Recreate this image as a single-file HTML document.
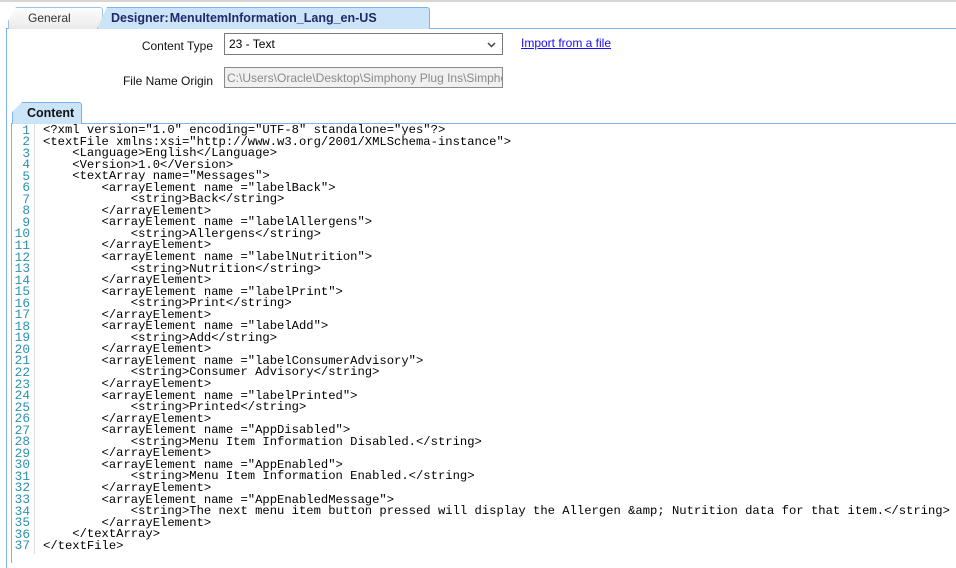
<!DOCTYPE html>
<html><head><meta charset="utf-8"><style>
*{margin:0;padding:0;box-sizing:border-box}
body{width:956px;height:553px;overflow:hidden;background:#fff;font-family:"Liberation Sans",sans-serif;position:relative}
.topline{position:absolute;left:0;top:0;width:956px;height:2px;background:#d6d6d6}
.tab{position:absolute;font-size:12px;}
.gen{left:8px;top:7px;width:95px;height:22px;background:linear-gradient(#fdfdfd,#eaeaea);border:1px solid #9cc3ea;border-bottom:none;border-radius:3px 3px 0 0;clip-path:polygon(8px 0,100% 0,100% 100%,0 100%,0 14px);color:#333;padding:3px 0 0 19px}
.des{left:97px;top:7px;width:333px;height:22px;background:#cce4f7;border:1px solid #7eb4ea;border-bottom:none;border-radius:3px 3px 0 0;clip-path:polygon(10px 0,100% 0,100% 100%,0 100%);color:#1e2a6a;font-weight:bold;padding:3px 0 0 13px;font-size:12.5px}
.panel{position:absolute;left:6px;top:28px;width:960px;height:540px;border-left:1px solid #7eb4ea;border-top:1px solid #7eb4ea}
.lbl{position:absolute;font-size:12px;color:#111;text-align:right}
.combo{position:absolute;left:224px;top:33px;width:279px;height:22px;border:1px solid #7a7a7a;background:#fff;font-size:12px;padding:3px 0 0 4px}
.combo svg{position:absolute;right:6px;top:8px}
.fn{position:absolute;left:224px;top:67px;width:279px;height:21px;border:1px solid #8a8a8a;background:#f0f0f0;color:#8a8a8a;font-size:12px;padding:3px 0 0 2px;white-space:nowrap;overflow:hidden}
.link{position:absolute;left:521px;top:36px;font-size:12px;color:#1a0dff;text-decoration:underline}
.ctab{position:absolute;left:12px;top:102px;width:70px;height:22px;background:#cce4f7;border:1px solid #7eb4ea;border-bottom:none;border-radius:3px 3px 0 0;clip-path:polygon(10px 0,100% 0,100% 100%,0 100%,0 10px);font-weight:bold;font-size:12.5px;color:#111;padding:3px 0 0 14px}
.ed{position:absolute;left:11px;top:123px;width:950px;height:440px;border-left:1px solid #7eb4ea;border-top:1px solid #7eb4ea;background:#fff}
.gut{position:absolute;left:12px;top:124px;width:23px;height:430px;border-right:1px solid #ddd}
.nums{position:absolute;left:12px;top:124.5px;width:18px;text-align:right;font-family:"Liberation Mono",monospace;font-size:12.8px;line-height:11.55px;color:#2b91af;white-space:pre}
.code{position:absolute;left:43px;top:125px;font-family:"Liberation Mono",monospace;font-size:12.2px;line-height:11.55px;color:#000;white-space:pre}
</style></head><body>
<div class="topline"></div>
<div class="panel"></div>
<div class="tab gen">General</div>
<div class="tab des">Designer:&#8202;MenuItemInformation_Lang_en-US</div>
<div class="lbl" style="left:100px;top:39px;width:113px">Content Type</div>
<div class="combo">23 - Text<svg width="9" height="6" viewBox="0 0 9 6"><path d="M1 1 L4.5 4.5 L8 1" fill="none" stroke="#444" stroke-width="1.5"/></svg></div>
<div class="link">Import from a file</div>
<div class="lbl" style="left:100px;top:74px;width:113px">File Name Origin</div>
<div class="fn">C:\Users\Oracle\Desktop\Simphony Plug Ins\Simphony</div>
<div class="ed"></div>
<div class="ctab">Content</div>
<div class="gut"></div>
<div class="nums">1
2
3
4
5
6
7
8
9
10
11
12
13
14
15
16
17
18
19
20
21
22
23
24
25
26
27
28
29
30
31
32
33
34
35
36
37</div>
<div class="code">&lt;?xml version="1.0" encoding="UTF-8" standalone="yes"?&gt;
&lt;textFile xmlns:xsi="http://www.w3.org/2001/XMLSchema-instance"&gt;
    &lt;Language&gt;English&lt;/Language&gt;
    &lt;Version&gt;1.0&lt;/Version&gt;
    &lt;textArray name="Messages"&gt;
        &lt;arrayElement name ="labelBack"&gt;
            &lt;string&gt;Back&lt;/string&gt;
        &lt;/arrayElement&gt;
        &lt;arrayElement name ="labelAllergens"&gt;
            &lt;string&gt;Allergens&lt;/string&gt;
        &lt;/arrayElement&gt;
        &lt;arrayElement name ="labelNutrition"&gt;
            &lt;string&gt;Nutrition&lt;/string&gt;
        &lt;/arrayElement&gt;
        &lt;arrayElement name ="labelPrint"&gt;
            &lt;string&gt;Print&lt;/string&gt;
        &lt;/arrayElement&gt;
        &lt;arrayElement name ="labelAdd"&gt;
            &lt;string&gt;Add&lt;/string&gt;
        &lt;/arrayElement&gt;
        &lt;arrayElement name ="labelConsumerAdvisory"&gt;
            &lt;string&gt;Consumer Advisory&lt;/string&gt;
        &lt;/arrayElement&gt;
        &lt;arrayElement name ="labelPrinted"&gt;
            &lt;string&gt;Printed&lt;/string&gt;
        &lt;/arrayElement&gt;
        &lt;arrayElement name ="AppDisabled"&gt;
            &lt;string&gt;Menu Item Information Disabled.&lt;/string&gt;
        &lt;/arrayElement&gt;
        &lt;arrayElement name ="AppEnabled"&gt;
            &lt;string&gt;Menu Item Information Enabled.&lt;/string&gt;
        &lt;/arrayElement&gt;
        &lt;arrayElement name ="AppEnabledMessage"&gt;
            &lt;string&gt;The next menu item button pressed will display the Allergen &amp;amp; Nutrition data for that item.&lt;/string&gt;
        &lt;/arrayElement&gt;
    &lt;/textArray&gt;
&lt;/textFile&gt;</div>
</body></html>
